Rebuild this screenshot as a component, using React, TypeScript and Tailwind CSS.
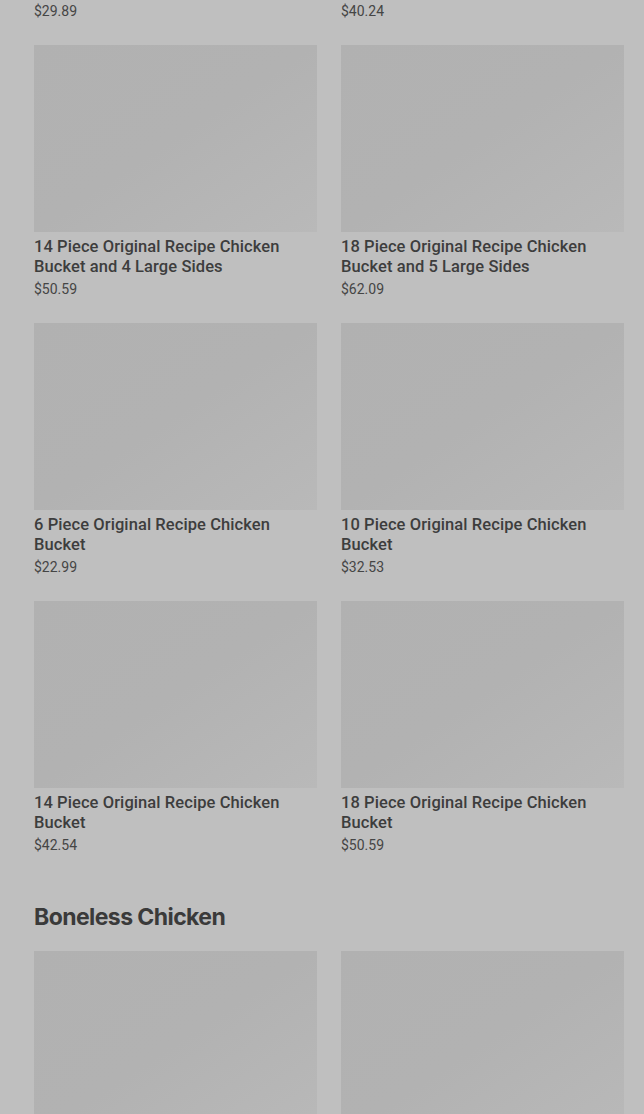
type Item = { name: string; price: string };

const buckets: Item[] = [
  { name: '6 Piece Original Recipe Chicken Bucket and 2 Large Sides', price: '$29.89' },
  { name: '10 Piece Original Recipe Chicken Bucket and 3 Large Sides', price: '$40.24' },
  { name: '14 Piece Original Recipe Chicken Bucket and 4 Large Sides', price: '$50.59' },
  { name: '18 Piece Original Recipe Chicken Bucket and 5 Large Sides', price: '$62.09' },
  { name: '6 Piece Original Recipe Chicken Bucket', price: '$22.99' },
  { name: '10 Piece Original Recipe Chicken Bucket', price: '$32.53' },
  { name: '14 Piece Original Recipe Chicken Bucket', price: '$42.54' },
  { name: '18 Piece Original Recipe Chicken Bucket', price: '$50.59' },
];

const boneless: Item[] = [
  { name: '8 Piece Tenders Meal', price: '$24.99' },
  { name: '12 Piece Tenders Meal', price: '$34.99' },
];

function ProductCard({ item }: { item: Item }) {
  return (
    <div className="flex flex-col">
      <div className="h-[187px] w-full bg-gradient-to-br from-[#b1b1b1] via-[#b2b2b2] to-[#b9b9b9]" />
      <div className="mt-[5px] text-[16.5px] leading-5 font-medium tracking-[0.005em] text-[#3d3d3d] [font-family:Roboto,'Liberation_Sans',sans-serif]">
        {item.name}
      </div>
      <div className="mt-[3px] text-[14px] leading-[18px] text-[#454545] [font-family:Roboto,'Liberation_Sans',sans-serif]">
        {item.price}
      </div>
    </div>
  );
}

export default function App() {
  return (
    <div className="h-[1114px] overflow-hidden bg-[#bfbfbf]">
      <div className="-mt-[233px] pl-[34px] pr-[20px]">
        {/* Buckets */}
        <section className="grid grid-cols-2 gap-x-6 gap-y-[25px]">
          {buckets.map((b) => (
            <ProductCard key={b.name} item={b} />
          ))}
        </section>

        {/* Boneless Chicken */}
        <h2 className="mt-[49px] mb-[20px] text-[23px] leading-7 font-bold tracking-tight text-[#3a3a3a] [font-family:Inter,'Liberation_Sans',sans-serif]">
          Boneless Chicken
        </h2>
        <section className="grid grid-cols-2 gap-x-6 gap-y-[25px]">
          {boneless.map((b) => (
            <ProductCard key={b.name} item={b} />
          ))}
        </section>
      </div>
    </div>
  );
}
